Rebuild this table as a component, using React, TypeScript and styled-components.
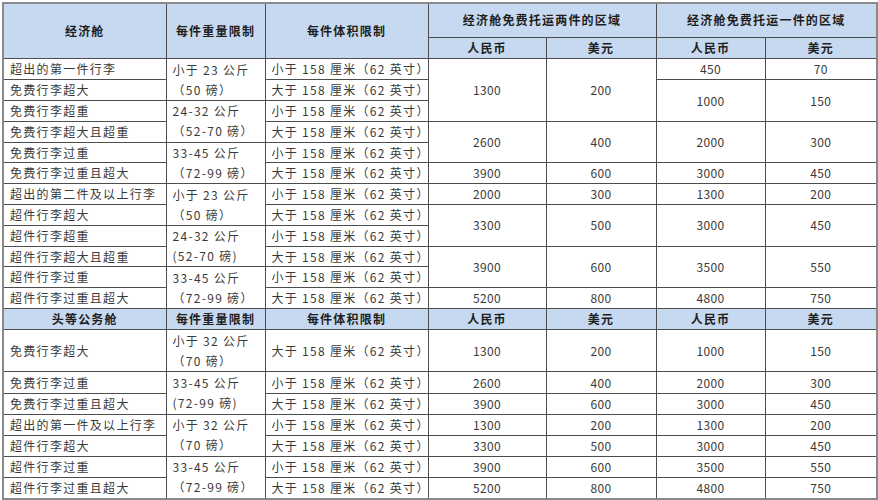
import React from "react";
import styled, { createGlobalStyle } from "styled-components";

const Global = createGlobalStyle`
  html, body { margin: 0; padding: 0; background: #ffffff; }
  body { font-family: "Noto Sans CJK SC", "Liberation Sans", sans-serif; }
`;

const Page = styled.div`
  padding: 2px 0 0 2px;
  width: 878px;
  height: 500px;
  box-sizing: border-box;
  overflow: hidden;
`;

const Table = styled.table`
  border-collapse: collapse;
  table-layout: fixed;
  width: 874px;
  border: 2px solid #8a8a8a;
  font-size: 12px;
  color: #3a3a3a;
`;

const Row = styled.tr<{ $h: number }>`
  height: ${(p) => p.$h}px;
`;

const HeadCell = styled.th`
  background: #c6d9f0;
  border: 1px solid #4d4d4d;
  font-weight: 700;
  color: #1e1e1e;
  letter-spacing: 1.2px;
  text-align: center;
  vertical-align: middle;
  padding: 0;
  line-height: 1;
  white-space: nowrap;
`;

const TextCell = styled.td`
  border: 1px solid #4d4d4d;
  text-align: left;
  vertical-align: middle;
  padding: 0 0 0 6px;
  letter-spacing: 1.3px;
  line-height: 1;
  white-space: nowrap;
`;

const NumCell = styled.td`
  border: 1px solid #4d4d4d;
  text-align: center;
  vertical-align: middle;
  padding: 0;
  line-height: 1;
  letter-spacing: 0.3px;
`;

const Line = styled.span`
  display: block;
  line-height: 20px;
  height: 20px;
`;

const H = 20.8;
const HB = 21.15;

type Span<T> = T & { span: number };
type Money = Span<{ cny: string; usd: string }>;
type RowData = {
  item: string;
  weight?: Span<{ lines: [string, string] }>;
  vol: "小" | "大";
  two?: Money;
  one?: Money;
  h?: number;
};

const economy: RowData[] = [
  { item: "超出的第一件行李", weight: { lines: ["小于 23 公斤", "（50 磅）"], span: 2 }, vol: "小", two: { cny: "1300", usd: "200", span: 3 }, one: { cny: "450", usd: "70", span: 1 } },
  { item: "免费行李超大", vol: "大", one: { cny: "1000", usd: "150", span: 2 } },
  { item: "免费行李超重", weight: { lines: ["24-32 公斤", "（52-70 磅）"], span: 2 }, vol: "小" },
  { item: "免费行李超大且超重", vol: "大", two: { cny: "2600", usd: "400", span: 2 }, one: { cny: "2000", usd: "300", span: 2 } },
  { item: "免费行李过重", weight: { lines: ["33-45 公斤", "（72-99 磅）"], span: 2 }, vol: "小" },
  { item: "免费行李过重且超大", vol: "大", two: { cny: "3900", usd: "600", span: 1 }, one: { cny: "3000", usd: "450", span: 1 } },
  { item: "超出的第二件及以上行李", weight: { lines: ["小于 23 公斤", "（50 磅）"], span: 2 }, vol: "小", two: { cny: "2000", usd: "300", span: 1 }, one: { cny: "1300", usd: "200", span: 1 } },
  { item: "超件行李超大", vol: "大", two: { cny: "3300", usd: "500", span: 2 }, one: { cny: "3000", usd: "450", span: 2 } },
  { item: "超件行李超重", weight: { lines: ["24-32 公斤", "(52-70 磅)"], span: 2 }, vol: "小" },
  { item: "超件行李超大且超重", vol: "大", two: { cny: "3900", usd: "600", span: 2 }, one: { cny: "3500", usd: "550", span: 2 } },
  { item: "超件行李过重", weight: { lines: ["33-45 公斤", "（72-99 磅）"], span: 2 }, vol: "小" },
  { item: "超件行李过重且超大", vol: "大", two: { cny: "5200", usd: "800", span: 1 }, one: { cny: "4800", usd: "750", span: 1 } },
];

const business: RowData[] = [
  { item: "免费行李超大", h: HB * 2, weight: { lines: ["小于 32 公斤", "（70 磅）"], span: 1 }, vol: "大", two: { cny: "1300", usd: "200", span: 1 }, one: { cny: "1000", usd: "150", span: 1 } },
  { item: "免费行李过重", h: HB, weight: { lines: ["33-45 公斤", "(72-99 磅)"], span: 2 }, vol: "小", two: { cny: "2600", usd: "400", span: 1 }, one: { cny: "2000", usd: "300", span: 1 } },
  { item: "免费行李过重且超大", h: HB, vol: "大", two: { cny: "3900", usd: "600", span: 1 }, one: { cny: "3000", usd: "450", span: 1 } },
  { item: "超出的第一件及以上行李", h: HB, weight: { lines: ["小于 32 公斤", "（70 磅）"], span: 2 }, vol: "小", two: { cny: "1300", usd: "200", span: 1 }, one: { cny: "1300", usd: "200", span: 1 } },
  { item: "超件行李超大", h: HB, vol: "大", two: { cny: "3300", usd: "500", span: 1 }, one: { cny: "3000", usd: "450", span: 1 } },
  { item: "超件行李过重", h: HB, weight: { lines: ["33-45 公斤", "（72-99 磅）"], span: 2 }, vol: "小", two: { cny: "3900", usd: "600", span: 1 }, one: { cny: "3500", usd: "550", span: 1 } },
  { item: "超件行李过重且超大", h: HB, vol: "大", two: { cny: "5200", usd: "800", span: 1 }, one: { cny: "4800", usd: "750", span: 1 } },
];

const DataRow: React.FC<{ r: RowData }> = ({ r }) => (
  <Row $h={r.h ?? H}>
    <TextCell>{r.item}</TextCell>
    {r.weight && (
      <TextCell rowSpan={r.weight.span}>
        <Line>{r.weight.lines[0]}</Line>
        <Line>{r.weight.lines[1]}</Line>
      </TextCell>
    )}
    <TextCell>{r.vol}于 158 厘米（62 英寸）</TextCell>
    {r.two && (
      <>
        <NumCell rowSpan={r.two.span}>{r.two.cny}</NumCell>
        <NumCell rowSpan={r.two.span}>{r.two.usd}</NumCell>
      </>
    )}
    {r.one && (
      <>
        <NumCell rowSpan={r.one.span}>{r.one.cny}</NumCell>
        <NumCell rowSpan={r.one.span}>{r.one.usd}</NumCell>
      </>
    )}
  </Row>
);

export default function App() {
  return (
    <Page>
      <Global />
      <Table>
        <colgroup>
          <col style={{ width: 163 }} />
          <col style={{ width: 99 }} />
          <col style={{ width: 163 }} />
          <col style={{ width: 118 }} />
          <col style={{ width: 110 }} />
          <col style={{ width: 109 }} />
          <col style={{ width: 112 }} />
        </colgroup>
        <tbody>
          <Row $h={34.4}>
            <HeadCell rowSpan={2}>经济舱</HeadCell>
            <HeadCell rowSpan={2}>每件重量限制</HeadCell>
            <HeadCell rowSpan={2}>每件体积限制</HeadCell>
            <HeadCell colSpan={2}>经济舱免费托运两件的区域</HeadCell>
            <HeadCell colSpan={2}>经济舱免费托运一件的区域</HeadCell>
          </Row>
          <Row $h={21.6}>
            <HeadCell>人民币</HeadCell>
            <HeadCell>美元</HeadCell>
            <HeadCell>人民币</HeadCell>
            <HeadCell>美元</HeadCell>
          </Row>
          {economy.map((r, i) => (
            <DataRow key={`e${i}`} r={r} />
          ))}
          <Row $h={HB}>
            <HeadCell>头等公务舱</HeadCell>
            <HeadCell>每件重量限制</HeadCell>
            <HeadCell>每件体积限制</HeadCell>
            <HeadCell>人民币</HeadCell>
            <HeadCell>美元</HeadCell>
            <HeadCell>人民币</HeadCell>
            <HeadCell>美元</HeadCell>
          </Row>
          {business.map((r, i) => (
            <DataRow key={`b${i}`} r={r} />
          ))}
        </tbody>
      </Table>
    </Page>
  );
}
